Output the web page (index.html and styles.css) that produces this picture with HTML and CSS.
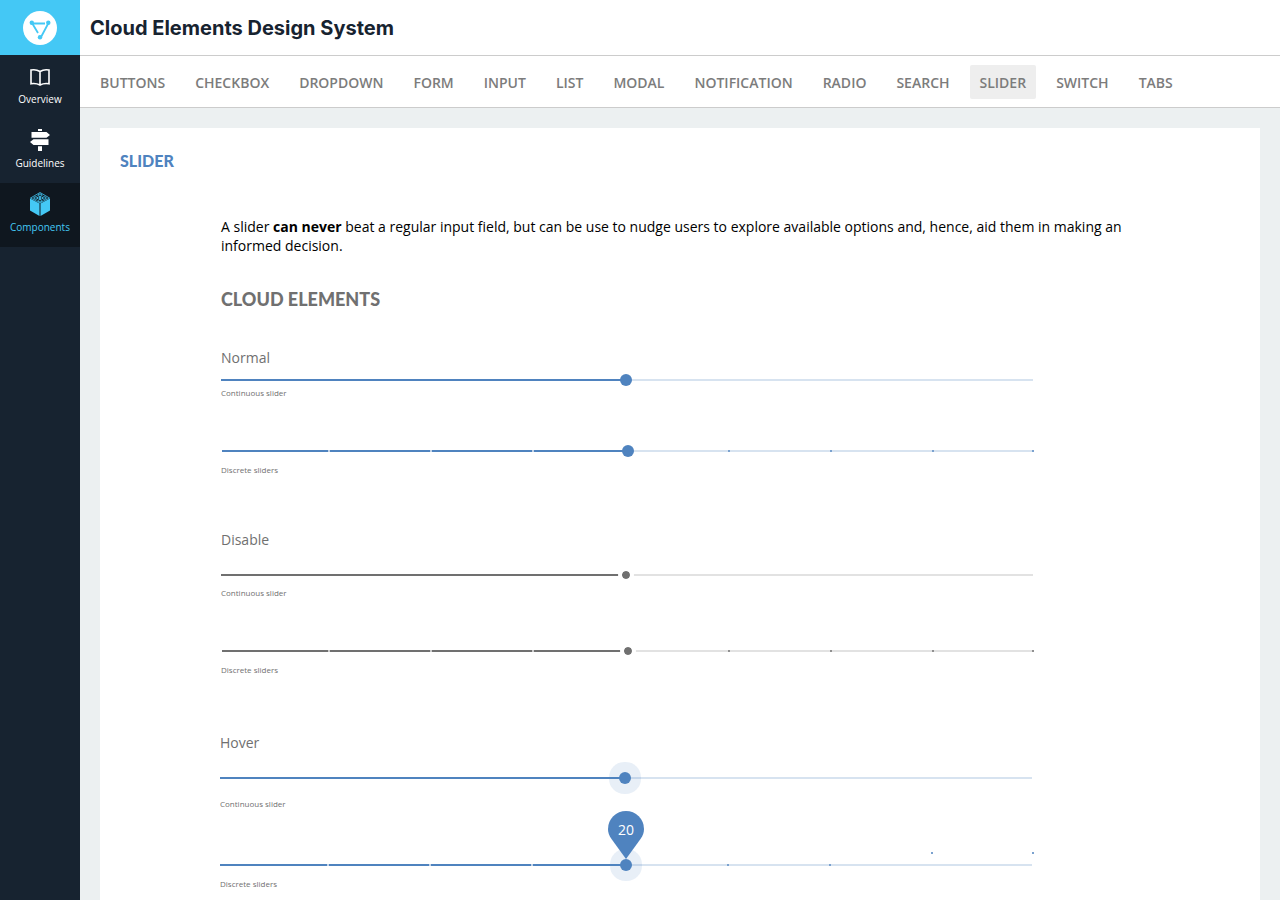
FILE: index.html
```html
<!DOCTYPE html>
<html lang="en">
<head>
<meta charset="utf-8">
<meta name="viewport" content="width=device-width, initial-scale=1">
<title>Cloud Elements Design System</title>
<link rel="stylesheet" href="styles.css">
</head>
<body>
<div class="app">
  <aside class="sidebar">
    <a class="logo" href="#" aria-label="Cloud Elements">
      <svg width="34" height="34" viewBox="0 0 34 34">
        <circle cx="17" cy="17" r="17" fill="#fff"/>
        <path d="M8.5 12.500H22M9 12L15 22M25.500 12L17.500 27" fill="none" stroke="#44c8f5" stroke-width="1.800"/>
        <g fill="#44c8f5"><circle cx="8.800" cy="11.700" r="2.200"/><circle cx="25.300" cy="11.700" r="2.200"/><circle cx="17" cy="26.300" r="2.200"/></g>
      </svg>
    </a>
    <nav class="menu" aria-label="Main">
      <a class="menu-item" href="#">
        <svg width="22" height="26" viewBox="0 0 22 26">
          <path d="M2 7Q7 6 11 8.500Q15 6 20 7V20.800Q15 20 11 22Q7 20 2 20.800ZM11 8.500V22" fill="none" stroke="#fff" stroke-width="1.600"/>
        </svg>
        <span>Overview</span>
      </a>
      <a class="menu-item" href="#">
        <svg width="22" height="26" viewBox="0 0 22 26">
          <path d="M9 2h4v2h-4zM2.500 5H17.500L21 8L17.500 10.800H2.500ZM4.500 12.200H19.500V18H4.500L1 15ZM9 19.200h4V24h-4z" fill="#fff"/>
        </svg>
        <span>Guidelines</span>
      </a>
      <a class="menu-item active" href="#" aria-current="page">
        <svg width="22" height="26" viewBox="0 0 22 26">
          <path d="M1 7.500L10.500 12.500V25L1 19.500ZM21 7.500L11.500 12.500V25L21 19.500Z" fill="#44c8f5"/>
          <path d="M1.500 7L11 1.500L20.500 7L11 12Z" fill="none" stroke="#44c8f5" stroke-width="0.800"/>
          <g fill="none" stroke="#44c8f5" stroke-width="1"><ellipse cx="11" cy="9.800" rx="2" ry="1.200"/><ellipse cx="6.800" cy="7" rx="2" ry="1.200"/><ellipse cx="15.200" cy="7" rx="2" ry="1.200"/><ellipse cx="11" cy="4.200" rx="2" ry="1.200"/><ellipse cx="11" cy="7" rx="1.300" ry="0.800"/></g>
        </svg>
        <span>Components</span>
      </a>
    </nav>
  </aside>
  <div class="page">
    <header class="header"><h1>Cloud Elements Design System</h1></header>
    <nav class="tabs" aria-label="Components">
      <a href="#">BUTTONS</a><a href="#">CHECKBOX</a><a href="#">DROPDOWN</a><a href="#">FORM</a><a href="#">INPUT</a><a href="#">LIST</a><a href="#">MODAL</a><a href="#">NOTIFICATION</a><a href="#">RADIO</a><a href="#">SEARCH</a><a class="active" href="#" aria-current="page">SLIDER</a><a href="#">SWITCH</a><a href="#">TABS</a>
    </nav>
    <main class="content">
      <article class="card">
        <h2>SLIDER</h2>
        <div class="doc">
          <p class="intro">A slider <strong>can never</strong> beat a regular input field, but can be use to nudge users to explore available options and, hence, aid them in making an informed decision.</p>
          <h3>CLOUD ELEMENTS</h3>
          <section class="state normal">
            <h4>Normal</h4>
            <div class="field continuous">
              <input id="normal-continuous" type="range" max="1000" value="499">
              <label for="normal-continuous">Continuous slider</label>
            </div>
            <div class="field discrete">
              <input id="normal-discrete" type="range" min="0" max="8" value="4">
              <label for="normal-discrete">Discrete sliders</label>
            </div>
          </section>
          <section class="state disabled">
            <h4>Disable</h4>
            <div class="field continuous">
              <input id="disabled-continuous" type="range" max="1000" value="499" disabled>
              <label for="disabled-continuous">Continuous slider</label>
            </div>
            <div class="field discrete">
              <input id="disabled-discrete" type="range" min="0" max="8" value="4" disabled>
              <label for="disabled-discrete">Discrete sliders</label>
            </div>
          </section>
          <section class="state hover">
            <h4>Hover</h4>
            <div class="field continuous">
              <input id="hover-continuous" type="range" max="1000" value="499">
              <label for="hover-continuous">Continuous slider</label>
            </div>
            <div class="field discrete">
              <input id="hover-discrete" type="range" min="0" max="40" value="20">
              <output class="pin" for="hover-discrete">
                <svg width="36" height="48" viewBox="0 0 36 48"><path d="M18 48L3.500 28C1 24.500 0 21.500 0 18A18 18 0 0 1 36 18C36 21.500 35 24.500 32.500 28Z" fill="#4f83bf"/></svg>
                <span>20</span>
              </output>
              <span class="mark mark-seven"></span>
              <span class="mark mark-eight"></span>
              <label for="hover-discrete">Discrete sliders</label>
            </div>
          </section>
        </div>
      </article>
    </main>
  </div>
</div>
</body>
</html>
```
FILE: styles.css
```css
* { box-sizing: border-box; }
body { margin: 0; font-family: "Open Sans", "Noto Sans", sans-serif; color: #000; }
h1, h2, h3, h4, p { margin: 0; }
a { color: inherit; text-decoration: none; }

.app { display: flex; min-height: 100vh; background: #ecf0f1; }

.sidebar { flex: 0 0 80px; background: #172330; color: #fff; }
.logo { display: flex; align-items: center; justify-content: center; height: 55px; background: #44c8f5; }
.menu { display: flex; flex-direction: column; }
.menu-item { display: flex; flex-direction: column; align-items: center; height: 64px; padding-top: 8px; font-size: 10px; line-height: 20px; }
.menu-item.active { background: #0f171f; color: #44c8f5; }

.page { flex: 1; min-width: 0; display: flex; flex-direction: column; }
.header { display: flex; align-items: center; height: 56px; padding: 0 10px; background: #fff; border-bottom: 1px solid #ccc; }
.header h1 { font: 700 20px/28px Inter, sans-serif; color: #172330; }
.tabs { display: flex; align-items: center; gap: 10px; height: 52px; padding: 0 10px; background: #fff; border-bottom: 1px solid #ccc; }
.tabs a { padding: 2px 10px 0; border-radius: 2px; font-size: 14px; font-weight: 600; line-height: 32px; color: #7c7c7c; }
.tabs a.active { background: #eee; }

.content { flex: 1; display: flex; padding: 20px 20px 0; }
.card { flex: 1; min-width: 0; padding: 20px 20px 0; background: #fff; }
.card h2 { font: 900 16px/26px "Lato Black", Lato, sans-serif; color: #4f83bf; }
.doc { margin: 43px 101px 0; }
.intro { font-size: 14px; line-height: 19px; }
.doc h3 { margin-top: 31px; font: 900 18px/26px "Lato Black", Lato, sans-serif; color: #707070; }

.state { --fill: #4f83bf; --rest: #d7e3f0; --mark: #7ba2cf; --gap: #c3d4e8; margin-right: 106px; color: #707070; }
.state h4 { font-size: 14px; font-weight: 400; line-height: 20px; }
.normal { margin-top: 36px; }
.disabled { --fill: #707070; --rest: #e2e2e2; --mark: #909090; --gap: #ccc; margin-top: 54px; }
.hover { margin-top: 57px; margin-left: -1px; margin-right: 107px; }
.field { position: relative; display: flex; flex-direction: column; }
.field label { font-size: 8px; line-height: 12px; }
.continuous { gap: 6px; margin-top: 19px; }
.normal .continuous { gap: 1px; margin-top: 6px; }
.hover .continuous { gap: 14px; }
.discrete { gap: 7px; margin-top: 46px; }
.normal .discrete input, .disabled .discrete input { margin-left: 1px; margin-right: -1px; }
.hover .discrete { margin-top: 49px; }

input[type="range"] { -webkit-appearance: none; appearance: none; height: 12px; margin: 0; background: none; }
input[type="range"]::-webkit-slider-runnable-track {
  height: 2px;
  background: linear-gradient(to right, var(--fill) 50%, var(--rest) 50%);
}
.discrete input[type="range"]::-webkit-slider-runnable-track {
  --g: linear-gradient(var(--gap), var(--gap));
  --m: linear-gradient(var(--mark), var(--mark));
  background:
    var(--g) 13.1% 0 / 2px 2px no-repeat,
    var(--g) 25.7% 0 / 2px 2px no-repeat,
    var(--g) 38.3% 0 / 2px 2px no-repeat,
    var(--m) 62.5% 0 / 2px 2px no-repeat,
    var(--m) 75.1% 0 / 2px 2px no-repeat,
    var(--m) 87.7% 0 / 2px 2px no-repeat,
    var(--m) 100% 0 / 2px 2px no-repeat,
    linear-gradient(to right, var(--fill) 50%, var(--rest) 50%);
}
.hover .discrete input[type="range"]::-webkit-slider-runnable-track {
  background:
    var(--g) 13.2% 0 / 2px 2px no-repeat,
    var(--g) 25.8% 0 / 2px 2px no-repeat,
    var(--g) 38.4% 0 / 2px 2px no-repeat,
    var(--m) 62.6% 0 / 2px 2px no-repeat,
    var(--m) 75.2% 0 / 2px 2px no-repeat,
    linear-gradient(to right, var(--fill) 50%, var(--rest) 50%);
}
input[type="range"]::-webkit-slider-thumb {
  -webkit-appearance: none;
  appearance: none;
  width: 12px;
  height: 12px;
  margin-top: -5px;
  border-radius: 50%;
  background: var(--fill);
}
input[type="range"]:disabled::-webkit-slider-thumb { width: 16px; height: 16px; margin-top: -7px; border: 4px solid #fff; background: var(--fill); background-clip: padding-box; }
.hover input[type="range"]::-webkit-slider-thumb { box-shadow: 0 0 0 10px rgba(79, 131, 191, 0.13); }

.pin { position: absolute; left: 50%; top: -48px; width: 36px; margin-left: -18px; color: #fff; font-size: 14px; line-height: 38px; text-align: center; }
.pin svg { display: block; }
.pin span { position: absolute; inset: 0; }
.mark { position: absolute; top: -7px; width: 2px; height: 2px; background: var(--mark); }
.mark-seven { left: 87.6%; }
.mark-eight { left: 100%; }
```
